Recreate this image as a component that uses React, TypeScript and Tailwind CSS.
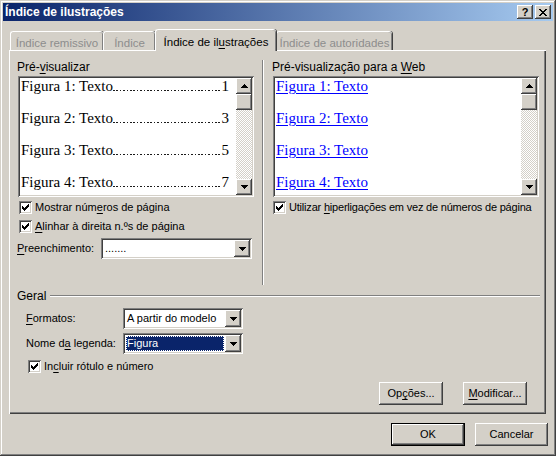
import React from "react";

const raised =
  "shadow-[inset_-1px_-1px_#404040,inset_1px_1px_#ffffff,inset_-2px_-2px_#808080,inset_2px_2px_#d4d0c8]";
const sunken =
  "shadow-[inset_1px_1px_#808080,inset_-1px_-1px_#ffffff,inset_2px_2px_#404040,inset_-2px_-2px_#d4d0c8]";

const entries = [
  { label: "Figura 1: Texto", page: "1" },
  { label: "Figura 2: Texto", page: "3" },
  { label: "Figura 3: Texto", page: "5" },
  { label: "Figura 4: Texto", page: "7" },
];

function U({ children }: { children: React.ReactNode }) {
  return <span className="underline underline-offset-[2px]">{children}</span>;
}

function Arrow({ down }: { down?: boolean }) {
  return (
    <svg
      width="7"
      height="4"
      viewBox="0 0 7 4"
      shapeRendering="crispEdges"
      className={down ? "rotate-180" : ""}
    >
      <path d="M3 0h1v1h1v1h1v1h1v1H0V3h1V2h1V1h1z" fill="#000" />
    </svg>
  );
}

function ArrowButton({ down, h = "h-[16px]" }: { down?: boolean; h?: string }) {
  return (
    <div className={`flex w-[16px] shrink-0 items-center justify-center bg-[#d4d0c8] ${h} ${raised}`}>
      <Arrow down={down} />
    </div>
  );
}

function ScrollBar() {
  return (
    <div className="flex h-full w-[16px] shrink-0 flex-col">
      <ArrowButton />
      <div className={`h-[16px] w-[16px] shrink-0 bg-[#d4d0c8] ${raised}`} />
      <div className="flex-1 bg-[repeating-conic-gradient(#d4d0c8_0_25%,#ffffff_0_50%)] bg-[length:2px_2px]" />
      <ArrowButton down />
    </div>
  );
}

function CheckBox() {
  return (
    <div className={`relative h-[13px] w-[13px] shrink-0 bg-white ${sunken}`}>
      <svg
        className="absolute left-[3px] top-[3px]"
        width="7"
        height="7"
        viewBox="0 0 7 7"
        shapeRendering="crispEdges"
      >
        <path
          d="M6 0h1v1h-1z M5 1h2v1h-2z M0 2h1v1h-1z M4 2h3v1h-3z M0 3h2v1h-2z M3 3h3v1h-3z M0 4h5v1h-5z M1 5h3v1h-3z M2 6h1v1h-1z"
          fill="#000"
        />
      </svg>
    </div>
  );
}

function CheckRow({ children, className = "" }: { children: React.ReactNode; className?: string }) {
  return (
    <div className={`flex h-[13px] items-center gap-[3px] whitespace-nowrap ${className}`}>
      <CheckBox />
      <span className="leading-[13px]">{children}</span>
    </div>
  );
}

function Combo({ value, width, selected }: { value: string; width: string; selected?: boolean }) {
  return (
    <div className={`flex h-[21px] shrink-0 bg-white p-[2px] ${width} ${sunken}`}>
      <div className="flex flex-1 items-center p-[1px]">
        {selected ? (
          <div className="flex h-full flex-1 items-center bg-[#0a246a] pl-[1px] text-white outline-1 outline-dotted outline-[#ffffff] -outline-offset-1">
            {value}
          </div>
        ) : (
          <span className="pl-[1px]">{value}</span>
        )}
      </div>
      <ArrowButton down h="h-[17px]" />
    </div>
  );
}

function Button({ children, width, isDefault }: { children: React.ReactNode; width: string; isDefault?: boolean }) {
  if (isDefault) {
    return (
      <div className={`h-[23px] border border-black ${width}`}>
        <div className={`flex h-full w-full items-center justify-center bg-[#d4d0c8] ${raised}`}>{children}</div>
      </div>
    );
  }
  return (
    <div className={`flex h-[23px] items-center justify-center bg-[#d4d0c8] ${width} ${raised}`}>{children}</div>
  );
}

function Tab({ children, width, active, disabled }: { children: React.ReactNode; width: string; active?: boolean; disabled?: boolean }) {
  return (
    <div
      className={`relative flex items-start justify-center whitespace-nowrap rounded-t-[3px] border-l border-t border-white bg-[#d4d0c8] pt-[3px] text-[11.5px] shadow-[inset_-1px_0_#808080,1px_0_#404040] ${width} ${
        active ? "z-10 -mb-[1px] h-[22px] pt-[4px]" : "h-[19px]"
      } ${disabled ? "text-[#8d8d8d]" : "text-black"}`}
    >
      {children}
    </div>
  );
}

function Leader() {
  return (
    <span className="mb-[4px] h-[1.5px] flex-1 self-end bg-[repeating-linear-gradient(to_right,#1a1a1a_0_1.5px,transparent_1.5px_3.4px)]" />
  );
}

export default function App() {
  return (
    <div
      className={`flex h-[456px] w-[556px] flex-col bg-[#d4d0c8] p-[3px] font-['Liberation_Sans',Arial,sans-serif] text-[11px] text-black shadow-[inset_-1px_-1px_#404040,inset_1px_1px_#d4d0c8,inset_-2px_-2px_#808080,inset_2px_2px_#ffffff]`}
    >
      {/* title bar */}
      <div className="flex h-[18px] shrink-0 items-center bg-[linear-gradient(to_right,#0a246a,#a6caf0)] pl-[2px] pr-[2px]">
        <span className="flex-1 text-[12px] font-bold text-white">Índice de ilustrações</span>
        <div className="flex gap-[2px]">
          <div className={`flex h-[14px] w-[16px] items-center justify-center bg-[#d4d0c8] text-[11px] font-bold leading-none ${raised}`}>
            ?
          </div>
          <div className={`flex h-[14px] w-[16px] items-center justify-center bg-[#d4d0c8] ${raised}`}>
            <svg width="8" height="7" viewBox="0 0 8 7" shapeRendering="crispEdges">
              <path
                d="M0 0h2v1h1v1h2V1h1V0h2v1H7v1H6v1H5v1h1v1h1v1h1v1H6V6H5V5H3v1H2v1H0V6h1V5h1V4h1V3H2V2H1V1H0z"
                fill="#000"
              />
            </svg>
          </div>
        </div>
      </div>

      {/* tabs */}
      <div className="mt-[8px] flex h-[21px] shrink-0 items-end pl-[7px]">
        <Tab width="w-[93px]" disabled>Índice remissivo</Tab>
        <Tab width="w-[52px]" disabled>Índice</Tab>
        <Tab width="w-[121px]" active>
          <span>
            Índice de il<U>u</U>strações
          </span>
        </Tab>
        <Tab width="w-[116px]" disabled>Índice de autoridades</Tab>
      </div>

      {/* panel */}
      <div className="ml-[6px] flex h-[364px] w-[537px] shrink-0 flex-col border-l border-t border-white shadow-[inset_-1px_-1px_#404040,inset_-2px_-2px_#808080] pl-[7px] pt-[9px]">
        <div className="flex">
          {/* left column */}
          <div className="flex w-[237px] flex-col">
            <div className="h-[14px] text-[12px] leading-[14px]">
              Pré-<U>v</U>isualizar
            </div>
            <div className={`ml-[1px] mt-[2px] flex h-[121px] w-[236px] bg-white p-[2px] ${sunken}`}>
              <div className="flex flex-1 flex-col overflow-hidden pl-[1px] pr-[7px] font-['Liberation_Serif','Times_New_Roman',serif] text-[15px]">
                {entries.map((e) => (
                  <div key={e.label} className="flex h-[32px] shrink-0 items-start leading-[17px]">
                    <span className="h-[17px] whitespace-nowrap">{e.label}</span>
                    <span className="flex h-[17px] flex-1">
                      <Leader />
                    </span>
                    <span>{e.page}</span>
                  </div>
                ))}
              </div>
              <ScrollBar />
            </div>
            <CheckRow className="ml-[2px] mt-[4px]">
              Mostrar núm<U>e</U>ros de página
            </CheckRow>
            <CheckRow className="ml-[2px] mt-[6px]">
              <U>A</U>linhar à direita n.ºs de página
            </CheckRow>
            <div className="mt-[5px] flex items-center">
              <span className="w-[84px]">
                <U>P</U>reenchimento:
              </span>
              <Combo value="......." width="w-[151px]" />
            </div>
          </div>

          {/* separator */}
          <div className="ml-[8px] mt-0 h-[225px] w-[2px] border-l border-[#808080] bg-white" />

          {/* right column */}
          <div className="ml-[8px] flex w-[267px] flex-col">
            <div className="h-[14px] text-[12px] leading-[14px]">
              Pré-visualização para a <U>W</U>eb
            </div>
            <div className={`ml-[1px] mt-[2px] flex h-[121px] w-[266px] bg-white p-[2px] ${sunken}`}>
              <div className="flex flex-1 flex-col overflow-hidden pl-[1px] font-['Liberation_Serif','Times_New_Roman',serif] text-[15px] text-[#0000ff]">
                {entries.map((e) => (
                  <div key={e.label} className="flex h-[32px] shrink-0 items-start leading-[17px]">
                    <span className="whitespace-nowrap underline underline-offset-[2px]">{e.label}</span>
                  </div>
                ))}
              </div>
              <ScrollBar />
            </div>
            <CheckRow className="ml-[1px] mt-[4px] tracking-[-0.2px]">
              Utilizar <U>h</U>iperligações em vez de números de página
            </CheckRow>
          </div>
        </div>

        {/* Geral group */}
        <div className="mt-[4px] flex h-[14px] items-center">
          <span className="text-[12px] leading-[14px]">Geral</span>
          <div className="ml-[4px] h-[2px] w-[490px] border-t border-[#808080] bg-white" />
        </div>
        <div className="ml-[9px] mt-[5px] flex items-center">
          <span className="w-[97px]">
            <U>F</U>ormatos:
          </span>
          <Combo value="A partir do modelo" width="w-[120px]" />
        </div>
        <div className="ml-[9px] mt-[4px] flex items-center">
          <span className="w-[97px]">
            Nome d<U>a</U> legenda:
          </span>
          <Combo value="Figura" width="w-[120px]" selected />
        </div>
        <CheckRow className="ml-[11px] mt-[6px]">
          In<U>c</U>luir rótulo e número
        </CheckRow>
        <div className="mr-[19px] mt-[9px] flex justify-end gap-[20px]">
          <Button width="w-[64px]">
            <span>
              Op<U>ç</U>ões...
            </span>
          </Button>
          <Button width="w-[64px]">
            <span>
              <U>M</U>odificar...
            </span>
          </Button>
        </div>
      </div>

      {/* dialog buttons */}
      <div className="mr-[5px] mt-[9px] flex justify-end gap-[10px]">
        <Button width="w-[74px]" isDefault>
          OK
        </Button>
        <Button width="w-[73px]">Cancelar</Button>
      </div>
    </div>
  );
}
